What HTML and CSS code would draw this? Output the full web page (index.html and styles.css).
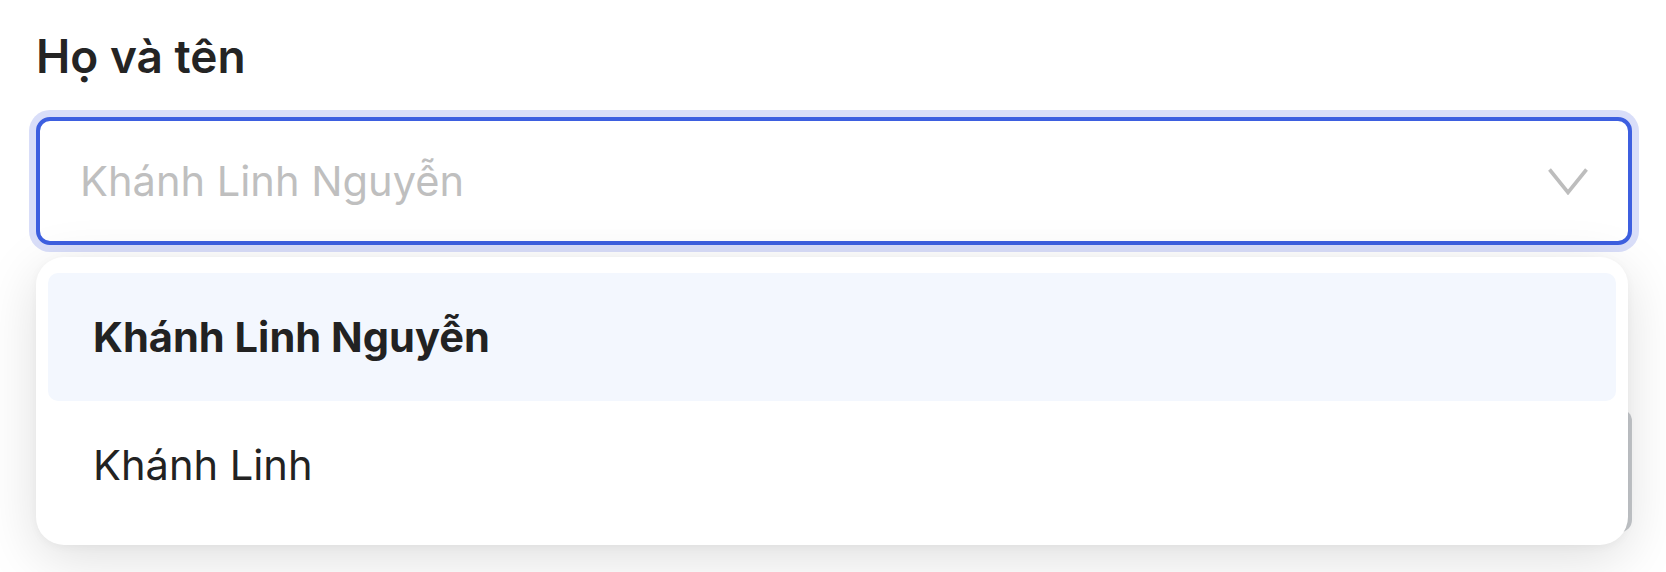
FILE: index.html
```html
<!DOCTYPE html>
<html lang="vi">
<head>
<meta charset="utf-8">
<title>Họ và tên</title>
<link rel="stylesheet" href="styles.css">
</head>
<body>
<div class="field">
  <label class="label">Họ và tên</label>
  <div class="select-wrap">
    <div class="select">
      <span class="placeholder">Khánh Linh Nguyễn</span>
      <svg class="chevron" width="40" height="27" viewBox="0 0 40 27" aria-hidden="true">
        <polyline points="1.5,1.5 20,24.5 38.5,1.5" fill="none" stroke="#bdbdbd" stroke-width="3.6" stroke-linejoin="miter"/>
      </svg>
    </div>
    <div class="behind"></div>
    <ul class="menu">
      <li class="option active">Khánh Linh Nguyễn</li>
      <li class="option">Khánh Linh</li>
    </ul>
  </div>
</div>
</body>
</html>
```
FILE: styles.css
```css
html, body {
  margin: 0;
  padding: 0;
  background: #ffffff;
  min-height: 572px;
}
body {
  font-family: Inter, "Noto Sans", "Liberation Sans", sans-serif;
  color: #222222;
}
.field {
  padding: 29px 34px 0 36px;
  display: flex;
  flex-direction: column;
}
.label {
  font-size: 46px;
  line-height: 55px;
  font-weight: 600;
  color: #242424;
  margin-bottom: 33px;
}
.select-wrap {
  position: relative;
  display: flex;
  flex-direction: column;
}
.select {
  box-sizing: border-box;
  height: 128px;
  border: 4px solid #3d5fe0;
  border-radius: 14px;
  box-shadow: 0 0 0 7px #d9def9;
  background: #ffffff;
  padding: 0 40px 0 40px;
  display: flex;
  align-items: center;
  justify-content: space-between;
}
.placeholder {
  font-size: 41.6px;
  color: #bfbfbf;
}
.chevron {
  display: block;
}
.behind {
  position: absolute;
  top: 292px;
  right: 0;
  width: 80px;
  height: 123px;
  background: #c8cbcf;
  border-radius: 12px;
}
.menu {
  position: relative;
  margin: 12px 4px 0 0;
  padding: 16px 12px;
  list-style: none;
  background: #ffffff;
  border-radius: 28px;
  box-shadow: 0 14px 56px rgba(0, 0, 0, 0.13), 0 2px 10px rgba(0, 0, 0, 0.04);
}
.option {
  height: 128px;
  display: flex;
  align-items: center;
  padding-left: 45px;
  font-size: 41.6px;
  color: #222222;
  border-radius: 10px;
}
.option.active {
  background: #f3f7fe;
  font-weight: 700;
}
```
